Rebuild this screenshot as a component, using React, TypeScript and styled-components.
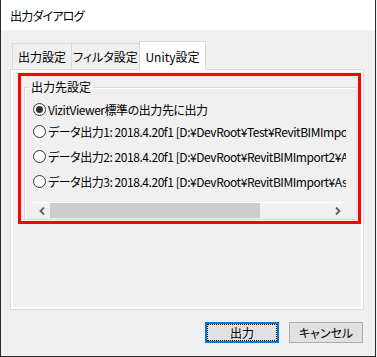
import styled, { createGlobalStyle } from "styled-components";

const GlobalStyle = createGlobalStyle`
  html, body {
    margin: 0;
    padding: 0;
    background: #f0f0f0;
    overflow: hidden;
  }
  body {
    font-family: "Noto Sans CJK JP", "Noto Sans", sans-serif;
    font-size: 12px;
    color: #000;
    font-feature-settings: "palt";
  }
`;

const outputs = [
  "データ出力1: 2018.4.20f1 [D:¥DevRoot¥Test¥RevitBIMImport¥Assets]",
  "データ出力2: 2018.4.20f1 [D:¥DevRoot¥RevitBIMImport2¥Assets]",
  "データ出力3: 2018.4.20f1 [D:¥DevRoot¥RevitBIMImport¥Assets]",
];

export default function App() {
  return (
    <>
      <GlobalStyle />
      <Window>
        <TitleBar>出力ダイアログ</TitleBar>
        <Body>
          <TabStrip>
            <Tab $w={60}>出力設定</Tab>
            <Tab $w={69}>フィルタ設定</Tab>
            <Tab $w={67} $active>Unity設定</Tab>
          </TabStrip>
          <TabPanel>
            <Page>
              <Highlight>
                <GroupBox>
                  <Legend>出力先設定</Legend>
                  <GroupContent>
                    <FirstRow>
                      <Radio $checked />
                      <Label>VizitViewer標準の出力先に出力</Label>
                    </FirstRow>
                    <ScrollArea>
                      {outputs.map((o) => (
                        <Row key={o}>
                          <Radio />
                          <Label>{o}</Label>
                        </Row>
                      ))}
                    </ScrollArea>
                    <ScrollBar>
                      <ArrowButton>
                        <svg width="6" height="8" viewBox="0 0 6 8">
                          <polyline points="5,0.5 1.5,4 5,7.5" fill="none" stroke="#606060" strokeWidth="1.8" />
                        </svg>
                      </ArrowButton>
                      <Thumb />
                      <Track />
                      <ArrowButton>
                        <svg width="6" height="8" viewBox="0 0 6 8">
                          <polyline points="1,0.5 4.5,4 1,7.5" fill="none" stroke="#606060" strokeWidth="1.8" />
                        </svg>
                      </ArrowButton>
                    </ScrollBar>
                  </GroupContent>
                </GroupBox>
              </Highlight>
            </Page>
          </TabPanel>
          <ButtonRow>
            <Button $default>出力</Button>
            <Button>キャンセル</Button>
          </ButtonRow>
        </Body>
      </Window>
    </>
  );
}

const Window = styled.div`
  width: 376px;
  height: 357px;
  box-sizing: border-box;
  border: 1px solid #2b2b2b;
  border-top: none;
  display: flex;
  flex-direction: column;
  background: #f0f0f0;
  overflow: hidden;
`;

const TitleBar = styled.div`
  height: 30px;
  flex-shrink: 0;
  background: #fff;
  display: flex;
  align-items: center;
  padding-left: 9px;
  letter-spacing: -0.8px;
`;

const Body = styled.div`
  flex: 1;
  min-width: 0;
  display: flex;
  flex-direction: column;
  padding: 11px 11px 0 9px;
`;

const TabStrip = styled.div`
  height: 28px;
  display: flex;
  align-items: flex-end;
  padding-left: 2px;
`;

const Tab = styled.div<{ $w: number; $active?: boolean }>`
  width: ${(p) => p.$w}px;
  height: ${(p) => (p.$active ? 29 : 26)}px;
  margin-bottom: ${(p) => (p.$active ? -1 : 0)}px;
  box-sizing: border-box;
  display: flex;
  align-items: center;
  justify-content: center;
  border: 1px solid #d9d9d9;
  border-bottom: none;
  background: ${(p) => (p.$active ? "#fff" : "#f0f0f0")};
  position: relative;
  z-index: ${(p) => (p.$active ? 1 : 0)};
  & + & {
    margin-left: -1px;
  }
`;

const TabPanel = styled.div`
  width: 354px;
  height: 241px;
  box-sizing: border-box;
  border: 1px solid #d9d9d9;
  background: #fff;
  padding: 2px;
  display: flex;
`;

const Page = styled.div`
  flex: 1;
  min-width: 0;
  background: #f0f0f0;
  padding: 1px 0 0 5px;
`;

const Highlight = styled.div`
  border: 3px solid #ff0000;
  padding: 4px 1px 1px 3px;
`;

const GroupBox = styled.fieldset`
  margin: 0;
  padding: 0;
  min-width: 0;
  border: 1px solid #dcdcdc;
  box-shadow: inset 1px 1px 0 #fff;
`;

const Legend = styled.legend`
  margin-left: 4px;
  padding: 0 2px;
  line-height: 14px;
`;

const GroupContent = styled.div`
  padding: 5px 10px 0 8px;
`;

const FirstRow = styled.div`
  height: 20px;
  display: flex;
  align-items: center;
  gap: 2px;
  white-space: nowrap;
`;

const ScrollArea = styled.div`
  overflow: hidden;
  padding-bottom: 8px;
`;

const Row = styled.div`
  height: 25px;
  display: flex;
  align-items: center;
  gap: 2px;
  white-space: nowrap;
`;

const Label = styled.span`
  letter-spacing: -0.45px;
`;

const Radio = styled.span<{ $checked?: boolean }>`
  width: 13px;
  height: 13px;
  flex-shrink: 0;
  box-sizing: border-box;
  border-radius: 50%;
  border: 1px solid #333;
  background: #fff;
  display: flex;
  align-items: center;
  justify-content: center;
  &::after {
    content: "";
    width: 7px;
    height: 7px;
    border-radius: 50%;
    background: ${(p) => (p.$checked ? "#333" : "transparent")};
  }
`;

const ScrollBar = styled.div`
  height: 17px;
  box-sizing: border-box;
  border-top: 1px solid #fff;
  display: flex;
  background: #f0f0f0;
`;

const ArrowButton = styled.div`
  width: 17px;
  flex-shrink: 0;
  display: flex;
  align-items: center;
  justify-content: center;
`;

const Thumb = styled.div`
  width: 210px;
  height: 15px;
  background: #cdcdcd;
`;

const Track = styled.div`
  flex: 1;
`;

const ButtonRow = styled.div`
  display: flex;
  justify-content: flex-end;
  gap: 10px;
  margin-top: 12px;
  width: 353px;
`;

const Button = styled.div<{ $default?: boolean }>`
  width: 74px;
  height: 21px;
  box-sizing: border-box;
  display: flex;
  align-items: center;
  justify-content: center;
  background: #e1e1e1;
  border: ${(p) => (p.$default ? "2px solid #0078d7" : "1px solid #adadad")};
  outline: ${(p) => (p.$default ? "1px dotted #000" : "none")};
  outline-offset: -3px;
`;
